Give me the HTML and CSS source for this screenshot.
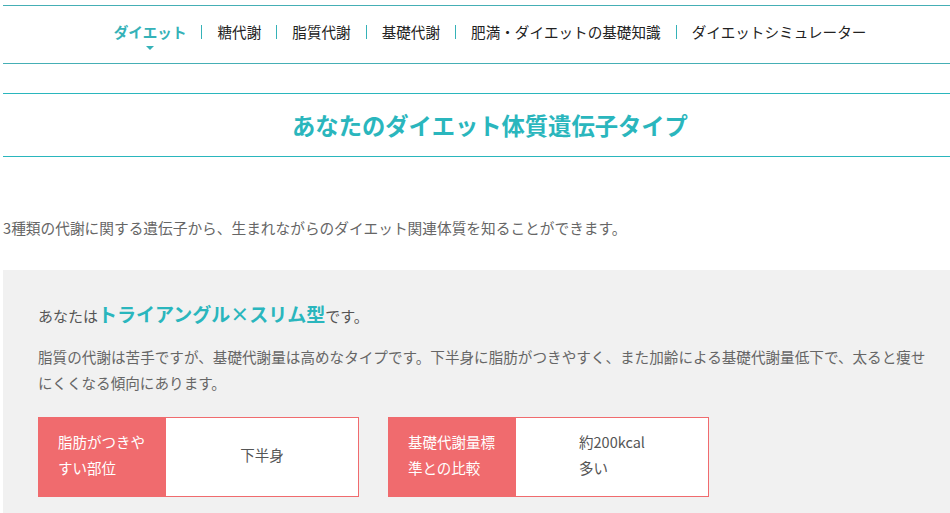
FILE: index.html
```html
<!DOCTYPE html>
<html lang="ja">
<head>
<meta charset="utf-8">
<link rel="stylesheet" href="styles.css">
</head>
<body>
<div class="page">
  <nav class="gnav">
    <ul class="gnav-list">
      <li class="gnav-item is-current">ダイエット</li>
      <li class="gnav-sep"></li>
      <li class="gnav-item">糖代謝</li>
      <li class="gnav-sep"></li>
      <li class="gnav-item">脂質代謝</li>
      <li class="gnav-sep"></li>
      <li class="gnav-item">基礎代謝</li>
      <li class="gnav-sep"></li>
      <li class="gnav-item">肥満・ダイエットの基礎知識</li>
      <li class="gnav-sep"></li>
      <li class="gnav-item">ダイエットシミュレーター</li>
    </ul>
  </nav>

  <header class="title-bar">
    <h1 class="title">あなたのダイエット体質遺伝子タイプ</h1>
  </header>

  <p class="intro">3種類の代謝に関する遺伝子から、生まれながらのダイエット関連体質を知ることができます。</p>

  <section class="result">
    <p class="result-lead">あなたは<strong class="result-type">トライアングル×スリム型</strong>です。</p>
    <p class="result-desc">脂質の代謝は苦手ですが、基礎代謝量は高めなタイプです。下半身に脂肪がつきやすく、また加齢による基礎代謝量低下で、太ると痩せにくくなる傾向にあります。</p>
    <div class="facts">
      <div class="fact">
        <div class="fact-label">脂肪がつきやすい部位</div>
        <div class="fact-value"><span class="fact-text">下半身</span></div>
      </div>
      <div class="fact">
        <div class="fact-label">基礎代謝量標準との比較</div>
        <div class="fact-value"><span class="fact-text">約200kcal<br>多い</span></div>
      </div>
    </div>
  </section>
</div>
</body>
</html>
```

FILE: styles.css
```css
html, body {
  margin: 0;
  padding: 0;
  background: #fff;
  overflow: hidden;
}
body {
  font-family: "Noto Sans CJK JP", "Noto Sans", sans-serif;
  color: #555;
}
.page {
  margin-left: 3px;
  width: 974px;
  padding-top: 5px;
}
.gnav {
  border-top: 1px solid #45afb5;
  border-bottom: 1px solid #45afb5;
  height: 57px;
  box-sizing: content-box;
  display: flex;
  align-items: center;
  justify-content: center;
  padding-bottom: 0;
}
.gnav-list {
  list-style: none;
  margin: 0 0 5px;
  padding: 0;
  display: flex;
  align-items: center;
}
.gnav-item {
  font-size: 14.6px;
  line-height: 20px;
  color: #222;
  position: relative;
}
.gnav-item.is-current {
  color: #35b2b8;
  font-weight: bold;
}
.gnav-item.is-current::after {
  content: "";
  position: absolute;
  left: 50%;
  top: 24px;
  margin-left: -4px;
  border-left: 4px solid transparent;
  border-right: 4px solid transparent;
  border-top: 4px solid #35b2b8;
}
.gnav-sep {
  width: 1px;
  height: 14px;
  background: #35b2b8;
  margin: 0 15px;
}
.title-bar {
  margin-top: 29px;
  border-top: 1px solid #2ab6bd;
  border-bottom: 1px solid #2ab6bd;
  height: 62px;
  display: flex;
  align-items: center;
  justify-content: center;
}
.title {
  margin: 0;
  font-size: 23.3px;
  font-weight: bold;
  color: #2ab6bd;
}
.intro {
  margin: 58px 0 0;
  font-size: 14.7px;
  line-height: 26px;
  color: #666;
}
.result {
  margin-top: 29px;
  background: #f1f1f1;
  padding: 31px 45px 20px 35px;
}
.result-lead {
  margin: 0;
  font-size: 15px;
  line-height: 26px;
  color: #555;
}
.result-type {
  font-size: 19px;
  color: #2ab6bd;
  font-weight: bold;
}
.result-desc {
  margin: 15px 0 0;
  font-size: 14.6px;
  line-height: 26px;
  color: #666;
}
.facts {
  display: flex;
  gap: 29px;
  margin-top: 21px;
}
.fact {
  display: flex;
  width: 321px;
  height: 80px;
  box-sizing: border-box;
  border: 1px solid #f06b6e;
  background: #fff;
}
.fact-label {
  width: 128px;
  box-sizing: border-box;
  margin: -1px 0 -1px -1px;
  padding: 0 20px 4px;
  background: #f06b6e;
  color: #fff;
  font-size: 14.5px;
  line-height: 26px;
  display: flex;
  align-items: center;
}
.fact-value {
  flex: 1;
  display: flex;
  align-items: center;
  justify-content: center;
  padding-bottom: 4px;
  font-size: 14.5px;
  line-height: 26px;
  color: #555;
}
.fact-text {
  display: inline-block;
  text-align: left;
}
```
